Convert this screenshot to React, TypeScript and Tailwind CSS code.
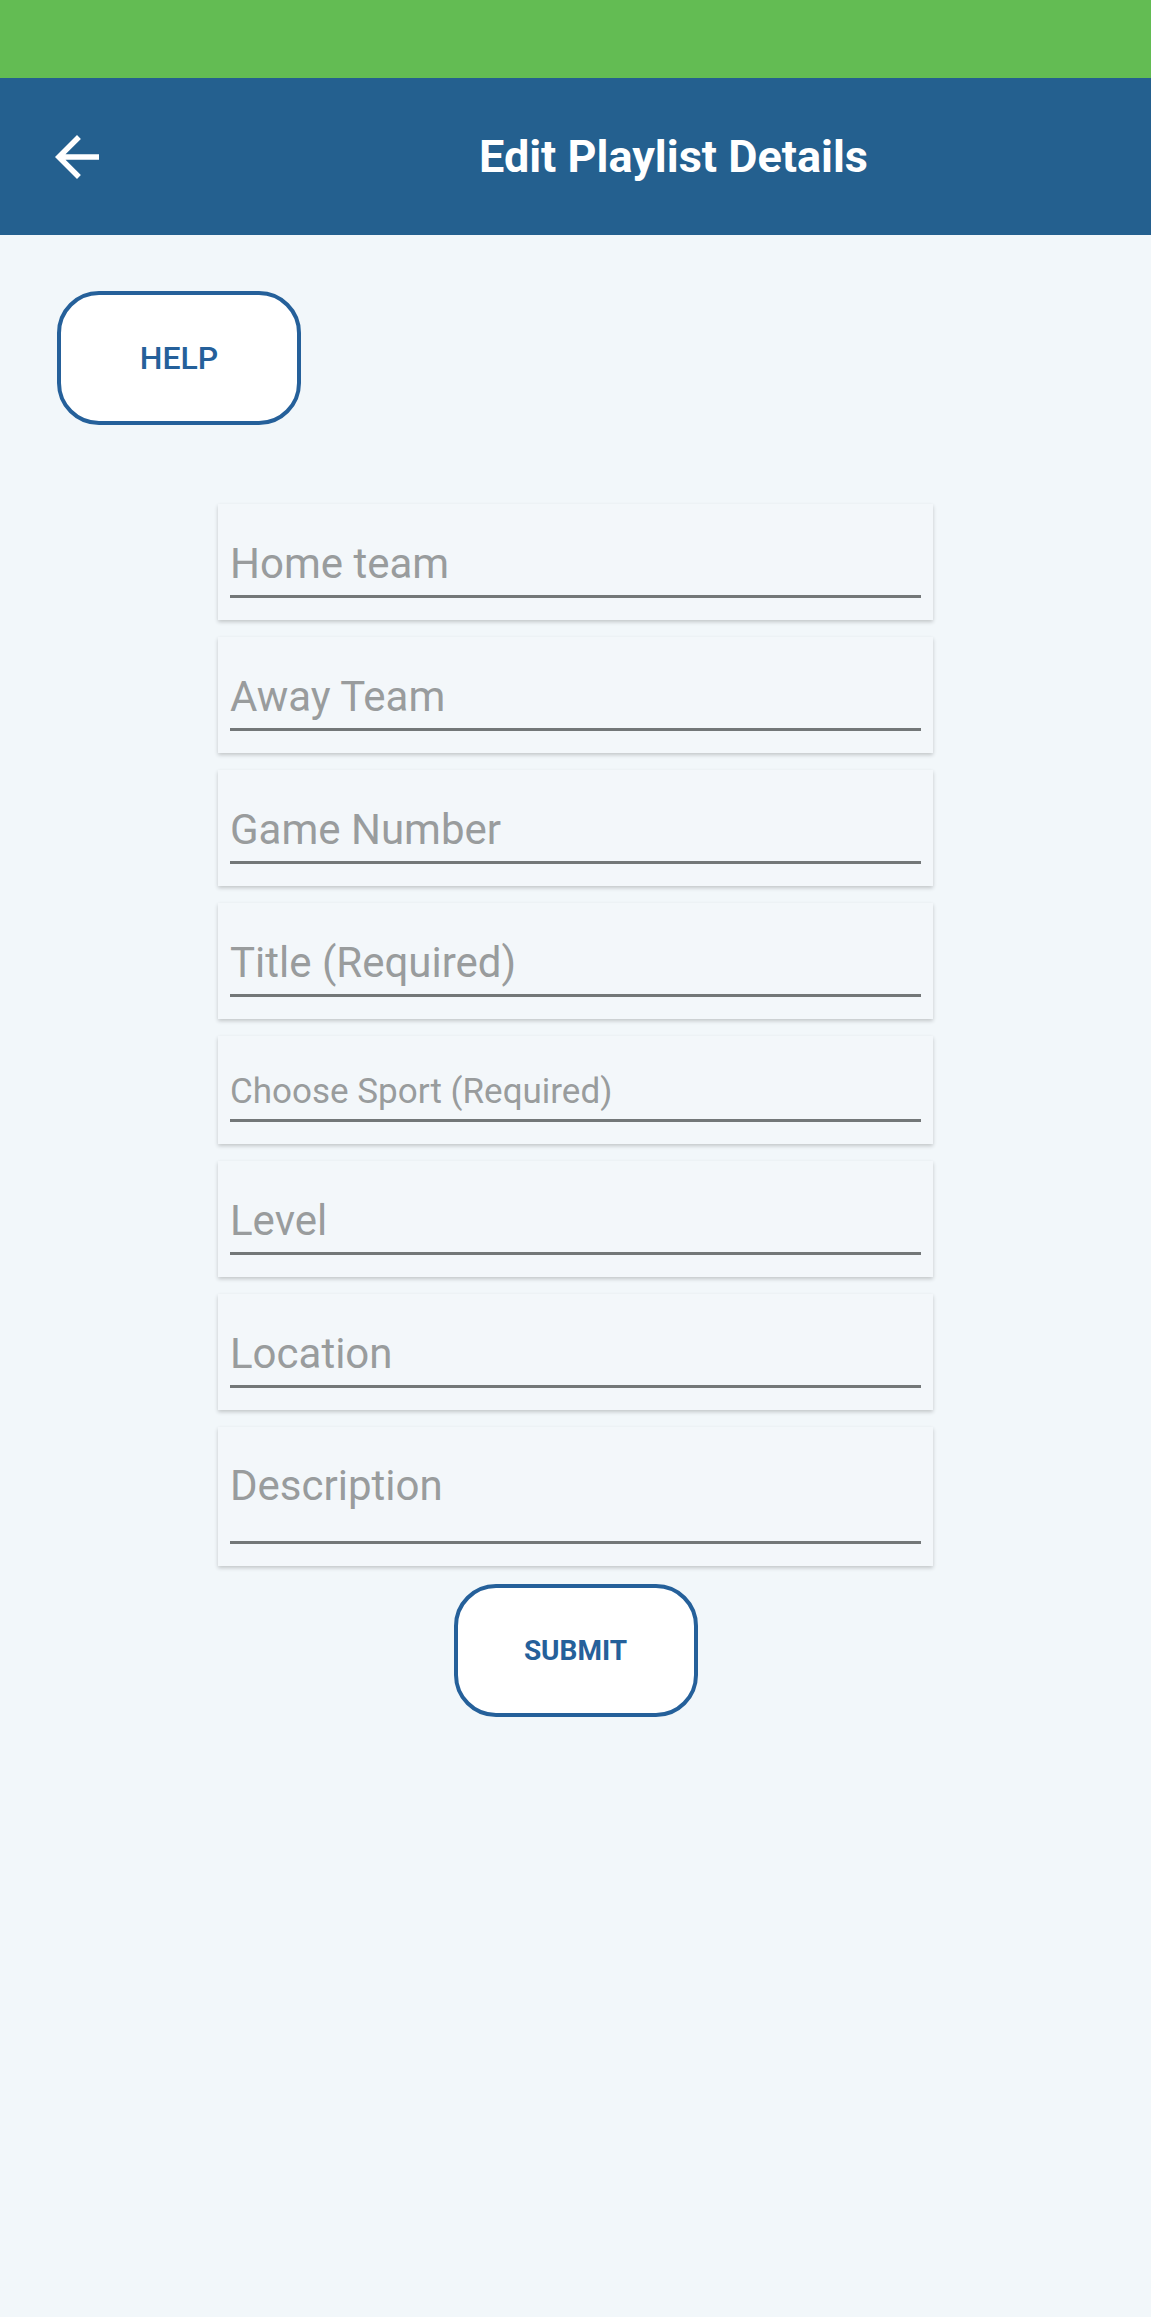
import React from "react";

const fields = [
  { label: "Home team", h: "h-[116px]", text: "text-[42px]", pb: "pb-[10px]" },
  { label: "Away Team", h: "h-[116px]", text: "text-[42px]", pb: "pb-[10px]" },
  { label: "Game Number", h: "h-[116px]", text: "text-[42px]", pb: "pb-[10px]" },
  { label: "Title (Required)", h: "h-[116px]", text: "text-[42px]", pb: "pb-[10px]" },
  { label: "Choose Sport (Required)", h: "h-[108px]", text: "text-[35px]", pb: "pb-[10px]" },
  { label: "Level", h: "h-[116px]", text: "text-[42px]", pb: "pb-[10px]" },
  { label: "Location", h: "h-[116px]", text: "text-[42px]", pb: "pb-[10px]" },
  { label: "Description", h: "h-[139px]", text: "text-[42px]", pb: "pb-[34px]" },
];

export default function App() {
  return (
    <div className="min-h-[2317px] bg-[#f2f7fa] font-['Roboto',sans-serif] flex flex-col">
      <div className="h-[78px] bg-[#63bc53]" />

      <header className="h-[157px] bg-[#24608f] flex items-center">
        <div className="w-[196px] pl-[44px] flex items-center">
          <svg width="66" height="66" viewBox="0 0 24 24" fill="#ffffff">
            <path d="M20 11H7.83l5.59-5.59L12 4l-8 8 8 8 1.41-1.41L7.83 13H20v-2z" />
          </svg>
        </div>
        <h1 className="flex-1 text-center text-[45px] font-bold text-white leading-none">
          Edit Playlist Details
        </h1>
      </header>

      <main className="flex-1 flex flex-col">
        <div className="pl-[57px] pt-[56px]">
          <button
            type="button"
            className="w-[244px] h-[134px] rounded-[42px] border-[4px] border-[#25609a] bg-white text-[32px] font-medium text-[#25609a]"
          >
            HELP
          </button>
        </div>

        <div className="mt-[79px] mx-auto w-[715px] flex flex-col gap-[17px]">
          {fields.map((f) => (
            <div
              key={f.label}
              className={`${f.h} bg-[#f3f7fa] shadow-[0_2px_4px_rgba(0,0,0,0.2)] px-[12px] pb-[22px] flex flex-col justify-end`}
            >
              <div className={`border-b-[3px] border-[#737778] ${f.pb}`}>
                <span className={`block ${f.text} leading-none text-[#999c9d]`}>{f.label}</span>
              </div>
            </div>
          ))}
        </div>

        <div className="mt-[18px] flex justify-center">
          <button
            type="button"
            className="w-[244px] h-[133px] rounded-[42px] border-[4px] border-[#25609a] bg-white text-[28px] font-bold text-[#25609a]"
          >
            SUBMIT
          </button>
        </div>
      </main>
    </div>
  );
}
